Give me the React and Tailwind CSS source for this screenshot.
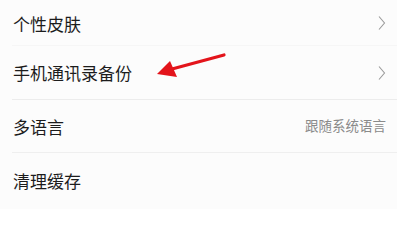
import React from 'react';

const Chevron = () => (
  <svg width="8" height="16" viewBox="0 0 8 16" fill="none" className="shrink-0">
    <path d="M1 1.5 L6.5 8 L1 14.5" stroke="#9a9a9a" strokeWidth="1.1" />
  </svg>
);

const Row = ({ label, right, chevron, className }) => (
  <div className={`flex items-center justify-between pl-[13px] pr-[11px] ${className}`}>
    <span className="text-[17px] text-[#1c1c1c] leading-none">{label}</span>
    <div className="flex items-center">
      {right && <span className="text-[13.5px] text-[#8a8a8a] leading-none">{right}</span>}
      {chevron && <Chevron />}
    </div>
  </div>
);

export default function App() {
  return (
    <div
      className="relative w-[411px] h-[209px] overflow-hidden bg-white"
      style={{ fontFamily: '"Noto Sans CJK SC", "Noto Sans", sans-serif' }}
    >
      <div className="w-[397px] h-full bg-[#fcfcfc] flex flex-col">
        <Row label="个性皮肤" chevron className="h-[45px] pt-[1px]" />
        <div className="ml-[12px] h-px bg-[#f6f6f6]" />
        <Row label="手机通讯录备份" chevron className="h-[53px]" />
        <div className="ml-[12px] h-px bg-[#ececec]" />
        <Row label="多语言" right="跟随系统语言" className="h-[52px] pr-[10px]" />
        <div className="ml-[12px] h-px bg-[#efefef]" />
        <Row label="清理缓存" className="h-[54px]" />
      </div>
      <svg className="absolute left-0 top-0" width="411" height="209" viewBox="0 0 411 209">
        <line x1="224" y1="55" x2="172" y2="69" stroke="#e3141b" strokeWidth="3.2" strokeLinecap="round" />
        <polygon points="157,74 170,61 177,77" fill="#e3141b" />
      </svg>
    </div>
  );
}
